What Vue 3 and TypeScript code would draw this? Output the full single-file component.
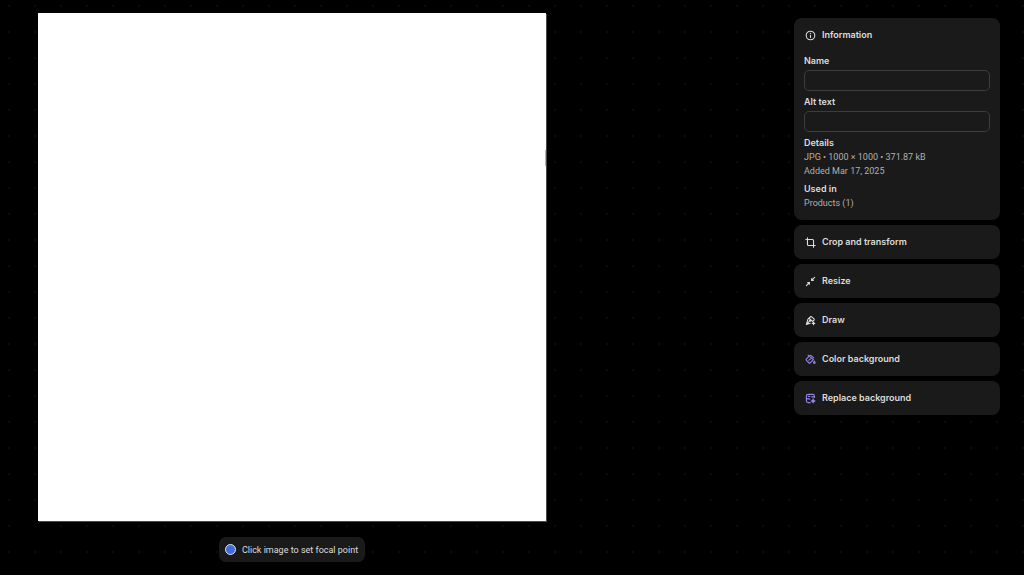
<script setup lang="ts">
import { ref } from 'vue'

type ToolIcon = 'crop' | 'resize' | 'draw' | 'fill' | 'replace'

interface Tool {
  label: string
  icon: ToolIcon
  magic?: boolean
}

const tools: Tool[] = [
  { label: 'Crop and transform', icon: 'crop' },
  { label: 'Resize', icon: 'resize' },
  { label: 'Draw', icon: 'draw' },
  { label: 'Color background', icon: 'fill', magic: true },
  { label: 'Replace background', icon: 'replace', magic: true },
]

const name = ref('')
const altText = ref('')
</script>

<template>
  <div class="editor">
    <main class="stage">
      <button class="canvas" type="button" aria-label="Image preview">
        <span class="edge"></span>
      </button>
      <p class="hint"><span class="focal"></span>Click image to set focal point</p>
    </main>

    <aside class="panel">
      <section class="card info">
        <h2 class="heading">
          <svg class="icon" viewBox="0 0 20 20" aria-hidden="true">
            <circle cx="10" cy="10" r="7.8" />
            <path d="M10 9.8v3.8" />
            <circle class="solid" cx="10" cy="6.5" r="0.4" />
          </svg>
          Information
        </h2>
        <div class="fields">
          <div class="field">
            <label for="file-name">Name</label>
            <input id="file-name" v-model="name" type="text" />
          </div>
          <div class="field">
            <label for="alt-text">Alt text</label>
            <input id="alt-text" v-model="altText" type="text" />
          </div>
          <div class="group">
            <h3>Details</h3>
            <p>JPG • 1000 × 1000 • 371.87 kB</p>
            <p>Added Mar 17, 2025</p>
          </div>
          <div class="group">
            <h3>Used in</h3>
            <p>Products (1)</p>
          </div>
        </div>
      </section>

      <button v-for="tool in tools" :key="tool.icon" class="card tool" type="button">
        <svg class="icon" :class="{ magic: tool.magic }" viewBox="0 0 20 20" aria-hidden="true">
          <g v-if="tool.icon === 'crop'">
            <path d="M4.5 1.5v12a2 2 0 0 0 2 2h12M1.5 4.5h12a2 2 0 0 1 2 2v12" />
          </g>
          <g v-else-if="tool.icon === 'resize'">
            <path d="M17.5 2.5l-5.5 5.5M2.5 17.5l5.5-5.5" />
            <path class="solid" d="M12 5v3h3zM8 15v-3H5z" />
          </g>
          <g v-else-if="tool.icon === 'draw'">
            <path d="M10 3.2a1.6 1.6 0 0 1 2.3 0l4 4a1.6 1.6 0 0 1 0 2.3l-1.5 1M10 3.2L5.4 7.5 2.5 17l7-2M2.8 16.7l5-5M8 6l6 6" />
            <circle cx="9.4" cy="10.2" r="1.2" />
            <path d="M15.5 13v4.5M13.2 15.3h4.6" />
          </g>
          <g v-else-if="tool.icon === 'fill'">
            <path d="M5.5 2l9.8 8.3-5.6 5.6a2 2 0 0 1-2.8 0L2.6 11.6a2 2 0 0 1 0-2.8l6-5.8a2 2 0 0 1 2.8 0l4.2 4.2M7 11.2l3.4-2.4" />
            <path class="solid" d="M17 13q1.6 2.4 1.3 3.4-.4.9-1.3.9t-1.3-.9q-.3-1 1.3-3.4z" />
          </g>
          <g v-else>
            <path d="M17.2 8V6a3.5 3.5 0 0 0-3.5-3.5H6A3.5 3.5 0 0 0 2.5 6v8A3.5 3.5 0 0 0 6 17.5h3.5M2.8 11.5l3-1.3 3 1M6.5 6.2h2M12 7h5" />
            <path class="solid" d="M14.8 11l.9 2.6 2.6.9-2.6.9-.9 2.6-.9-2.6-2.6-.9 2.6-.9z" />
          </g>
        </svg>
        {{ tool.label }}
      </button>
    </aside>
  </div>
</template>

<style>
body {
  margin: 0;
  background: #000;
}
</style>

<style scoped>
.editor {
  display: flex;
  justify-content: space-between;
  align-items: flex-start;
  box-sizing: border-box;
  min-height: 100vh;
  gap: 24px;
  padding: 13px 24px 13px 38px;
  background: radial-gradient(circle, #0c0c0c 1px, transparent 1px) -4px -7px / 26px 26px #000;
  color: #dcdcdc;
  font-family: Inter, "Liberation Sans", sans-serif;
  font-size: 9px;
  line-height: 14px;
}

h2,
h3,
p {
  margin: 0;
  font-size: inherit;
}

.stage {
  display: flex;
  flex: 0 1 calc(100vh - 67px);
  flex-direction: column;
  align-items: center;
  gap: 16px;
  min-width: 0;
}

.canvas {
  position: relative;
  width: 100%;
  aspect-ratio: 1;
  padding: 0;
  border: 0;
  border-radius: 0;
  background: #fff;
  box-shadow: 1px 1px 0 #4a4a4a;
  cursor: crosshair;
}

.edge {
  position: absolute;
  top: 27%;
  right: 0;
  width: 1px;
  height: 16px;
  background: #b4b4b4;
}

.hint {
  display: flex;
  align-items: center;
  box-sizing: border-box;
  height: 25px;
  gap: 6px;
  padding: 0 7px 0 6px;
  border-radius: 7px;
  background: #1a1a1a;
  white-space: nowrap;
}

.hint,
.group p {
  font-family: Roboto, "Liberation Sans", sans-serif;
}

.focal {
  box-sizing: border-box;
  width: 11px;
  height: 11px;
  border: 1px solid #dce3f5;
  border-radius: 50%;
  background: #416ddb;
}

.panel {
  display: flex;
  flex: 0 0 206px;
  flex-direction: column;
  gap: 5px;
  padding-top: 5px;
}

.card {
  box-sizing: border-box;
  border: 0;
  border-radius: 8px;
  background: #1a1a1a;
}

.info {
  padding: 10px;
}

.heading,
.tool {
  display: flex;
  align-items: center;
  gap: 6px;
  font-weight: 600;
}

.heading {
  padding-left: 1px;
}

.tool {
  height: 34px;
  padding: 0 11px;
  color: inherit;
  font-family: inherit;
  font-size: inherit;
  line-height: inherit;
  text-align: left;
  cursor: pointer;
}

.icon {
  width: 11px;
  height: 11px;
  fill: none;
  stroke: currentColor;
  stroke-width: 2;
  stroke-linecap: round;
  stroke-linejoin: round;
}

.magic {
  color: #9783e8;
}

.solid {
  fill: currentColor;
}

.fields {
  display: flex;
  flex-direction: column;
  gap: 4px;
  padding-top: 12px;
}

.field {
  display: flex;
  flex-direction: column;
  gap: 2px;
}

.field label,
.group h3 {
  font-weight: 600;
}

.field input {
  box-sizing: border-box;
  width: 100%;
  height: 21px;
  padding: 0 6px;
  border: 1px solid #3d3d3d;
  border-radius: 5px;
  outline: none;
  background: #1a1a1a;
  color: inherit;
  font: inherit;
}

.group p {
  color: #b0b0b0;
}
</style>
